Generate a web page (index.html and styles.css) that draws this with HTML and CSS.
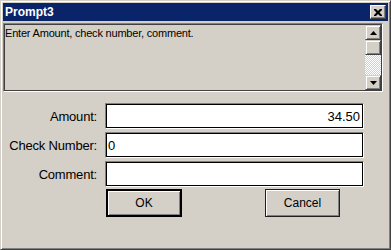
FILE: index.html
```html
<!DOCTYPE html>
<html lang="en">
<head>
    <meta charset="UTF-8">
    <meta name="viewport" content="width=device-width, initial-scale=1.0">
    <link rel="stylesheet" href="styles.css">
</head>
<body>
    <div class="window">
        <div class="titlebar">
            <span class="title">Prompt3</span>
            <div class="close">
                <svg width="8" height="7" viewBox="0 0 8 7"><path d="M0 0h2l2 2 2-2h2v1l-2.5 2.5 2.5 2.5v1h-2l-2-2-2 2h-2v-1l2.5-2.5-2.5-2.5z" fill="#000"/></svg>
            </div>
        </div>
        <div class="memo">
            <div class="memo-text">Enter Amount, check number, comment.</div>
            <div class="scrollbar">
                <div class="sb-btn"><svg width="7" height="4" viewBox="0 0 7 4"><path d="M3.5 0L7 4H0z" fill="#000"/></svg></div>
                <div class="sb-thumb"></div>
                <div class="sb-track"></div>
                <div class="sb-btn"><svg width="7" height="4" viewBox="0 0 7 4"><path d="M0 0h7L3.5 4z" fill="#000"/></svg></div>
            </div>
        </div>
        <div class="fields">
            <label>Amount:</label>
            <input type="text" class="edit right" value="34.50">
            <label>Check Number:</label>
            <input type="text" class="edit" value="0">
            <label>Comment:</label>
            <input type="text" class="edit" value="">
        </div>
        <div class="buttons">
            <button type="button" class="btn btn-default">OK</button>
            <button type="button" class="btn btn-cancel">Cancel</button>
        </div>
    </div>
</body>
</html>
```

FILE: styles.css
```css
html, body {
    margin: 0;
    padding: 0;
}
body {
    background-color: #d4d0c8;
    font-family: "Liberation Sans", Arial, sans-serif;
}
.window {
    box-sizing: border-box;
    width: 391px;
    height: 250px;
    padding: 2px;
    background-color: #d4d0c8;
    border: 1px solid;
    border-color: #d4d0c8 #404040 #404040 #d4d0c8;
    box-shadow: inset 1px 1px #fff, inset -1px -1px #808080;
    display: flex;
    flex-direction: column;
}
.titlebar {
    height: 18px;
    background-color: #0a246a;
    display: flex;
    align-items: center;
    justify-content: space-between;
    padding-left: 2px;
}
.title {
    color: #fff;
    font-weight: bold;
    font-size: 12px;
}
.close {
    box-sizing: border-box;
    width: 16px;
    height: 14px;
    margin-right: 2px;
    background-color: #d4d0c8;
    border: 1px solid;
    border-color: #fff #404040 #404040 #fff;
    box-shadow: inset -1px -1px #808080;
    display: flex;
    align-items: center;
    justify-content: center;
    padding-right: 1px;
}
/* memo area */
.memo {
    box-sizing: border-box;
    margin-top: 2px;
    width: 380px;
    height: 69px;
    border: 1px solid;
    border-color: #808080 #fff #fff #808080;
    box-shadow: inset 1px 1px #404040, inset -1px -1px #404040;
    padding: 1px;
    display: flex;
}
.memo-text {
    flex: 1;
    font-size: 11px;
    line-height: 13px;
    letter-spacing: -0.2px;
    padding: 2px 0;
    color: #000;
}
.scrollbar {
    width: 16px;
    display: flex;
    flex-direction: column;
}
.sb-btn, .sb-thumb {
    box-sizing: border-box;
    height: 15px;
    background-color: #d4d0c8;
    border: 1px solid;
    border-color: #d4d0c8 #404040 #404040 #d4d0c8;
    box-shadow: inset 1px 1px #fff, inset -1px -1px #808080;
    display: flex;
    align-items: center;
    justify-content: center;
}
.sb-track {
    flex: 1;
    background-color: #fff;
    background-image: repeating-conic-gradient(#d4d0c8 0 25%, #fff 0 50%);
    background-size: 2px 2px;
}
/* fields */
.fields {
    margin-top: 11px;
    display: grid;
    grid-template-columns: 94px 259px;
    grid-auto-rows: 26px;
    column-gap: 8px;
    row-gap: 3px;
}
.fields label {
    font-size: 13px;
    letter-spacing: -0.2px;
    text-align: right;
    align-self: center;
    color: #000;
}
.edit {
    box-sizing: border-box;
    width: 259px;
    height: 26px;
    margin: 0;
    padding: 0 3px 0 2px;
    font-family: "Liberation Sans", Arial, sans-serif;
    font-size: 13px;
    color: #000;
    background-color: #fff;
    border: 1px solid;
    border-color: #808080 #fff #fff #808080;
    box-shadow: inset 1px 1px #000, inset -1px -1px #000;
    outline: none;
}
.right {
    text-align: right;
}
/* buttons */
.buttons {
    margin-top: 2px;
    padding-left: 103px;
    display: flex;
    gap: 83px;
}
.btn {
    box-sizing: border-box;
    height: 28px;
    margin: 0;
    padding: 0;
    font-family: "Liberation Sans", Arial, sans-serif;
    font-size: 12px;
    color: #000;
    background-color: #d4d0c8;
}
.btn-default {
    width: 76px;
    border: 2px solid #000;
    box-shadow: inset 1px 1px #fff, inset -1px -1px #808080;
}
.btn-cancel {
    width: 75px;
    border: 1px solid #202020;
    box-shadow: inset 1px 1px #fff, inset -1px -1px #808080;
}
```
